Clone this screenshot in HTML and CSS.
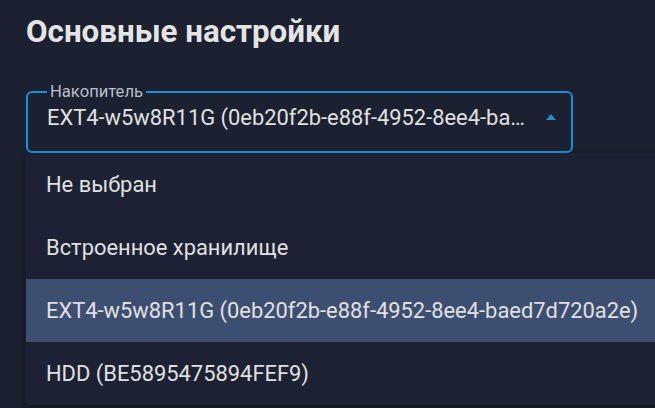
FILE: index.html
```html
<!DOCTYPE html>
<html lang="ru">
<head>
<meta charset="utf-8">
<link rel="stylesheet" href="styles.css">
</head>
<body>
<div class="page">
  <h1 class="title">Основные настройки</h1>
  <div class="field">
    <fieldset class="select">
      <legend class="label">Накопитель</legend>
      <div class="value-row">
        <span class="value">EXT4-w5w8R11G (0eb20f2b-e88f-4952-8ee4-baed7d720a2e)</span>
        <svg class="arrow" width="10" height="6" viewBox="0 0 10 6"><path d="M0 6 L5 0 L10 6 Z" fill="#1a90d6"/></svg>
      </div>
    </fieldset>
    <ul class="menu">
      <li class="item">Не выбран</li>
      <li class="item">Встроенное хранилище</li>
      <li class="item selected">EXT4-w5w8R11G (0eb20f2b-e88f-4952-8ee4-baed7d720a2e)</li>
      <li class="item">HDD (BE5895475894FEF9)</li>
    </ul>
  </div>
</div>
</body>
</html>
```

FILE: styles.css
```css
html, body {
  margin: 0;
  padding: 0;
  background: #1b2130;
  height: 100%;
  overflow: hidden;
}
body {
  font-family: Roboto, "Liberation Sans", sans-serif;
  color: #e0e0e0;
}
.page {
  padding: 14px 0 0 26px;
}
.title {
  margin: 0;
  font-size: 31.3px;
  font-weight: 700;
  line-height: 36px;
  color: #e4e4e4;
}
.field {
  position: relative;
  margin-top: 34px;
}
.select {
  margin: 0;
  width: 547px;
  box-sizing: border-box;
  height: 69px;
  border: 2px solid #1a8fd4;
  border-radius: 6px;
  padding: 0 15px 0 19px;
}
.label {
  padding: 0 3px;
  margin-left: 0;
  font-size: 16.6px;
  line-height: 16px;
  color: #b9bfcb;
}
.value-row {
  display: flex;
  align-items: center;
  height: 42px;
  margin-top: -4px;
}
.value {
  width: 481px;
  flex: none;
  white-space: nowrap;
  overflow: hidden;
  text-overflow: ellipsis;
  font-size: 21.9px;
  color: #e0e0e0;
}
.arrow {
  flex: none;
  margin-left: auto;
  margin-right: 0;
}
.menu {
  position: absolute;
  left: 0;
  top: 69px;
  width: 660px;
  margin: 0;
  padding: 0;
  list-style: none;
  background: #1c2233;
  border-radius: 4px;
  box-shadow: 0 4px 10px rgba(0,0,0,0.35);
}
.item {
  height: 63px;
  display: flex;
  align-items: center;
  padding-left: 20px;
  font-size: 21.9px;
  color: #e0e0e0;
  white-space: nowrap;
}
.item.selected {
  background: #3d4f70;
}
```
